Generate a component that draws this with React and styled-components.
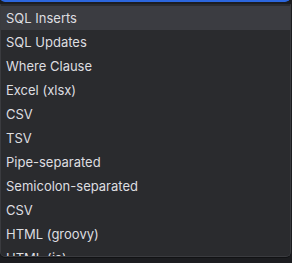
import React from "react";
import styled, { createGlobalStyle } from "styled-components";

const GlobalStyle = createGlobalStyle`
  html, body {
    margin: 0;
    padding: 0;
    background: #1c1d20;
    overflow: hidden;
  }
`;

const Page = styled.div`
  width: 292px;
  height: 263px;
  display: flex;
  flex-direction: column;
  font-family: "Inter", "Liberation Sans", sans-serif;
`;

const FieldEdge = styled.div`
  height: 4px;
  margin-top: -4px;
  margin-right: 2px;
  border: 2px solid #2c66dc;
  border-top: none;
  border-radius: 0 0 5px 5px;
`;

const Popup = styled.div`
  margin-top: 2px;
  margin-right: 1px;
  height: 253px;
  box-sizing: border-box;
  background: #2a2b2e;
  border: 1px solid #3a3b3f;
  border-top-color: #2a2b2e;
  border-radius: 0 0 5px 5px;
  padding-top: 1px;
  overflow: hidden;
  box-shadow: 0 1px 0 #111214;
`;

const Item = styled.div`
  height: 24px;
  display: flex;
  align-items: center;
  padding-left: 5px;
  font-size: 13px;
  color: #dedee0;
  background: ${(p) => (p.active ? "#3b3c41" : "transparent")};
  white-space: nowrap;
`;

const items = [
  "SQL Inserts",
  "SQL Updates",
  "Where Clause",
  "Excel (xlsx)",
  "CSV",
  "TSV",
  "Pipe-separated",
  "Semicolon-separated",
  "CSV",
  "HTML (groovy)",
  "HTML (js)",
];

export default function App() {
  return (
    <Page>
      <GlobalStyle />
      <FieldEdge />
      <Popup>
        {items.map((label, i) => (
          <Item key={i} active={i === 0}>
            {label}
          </Item>
        ))}
      </Popup>
    </Page>
  );
}
